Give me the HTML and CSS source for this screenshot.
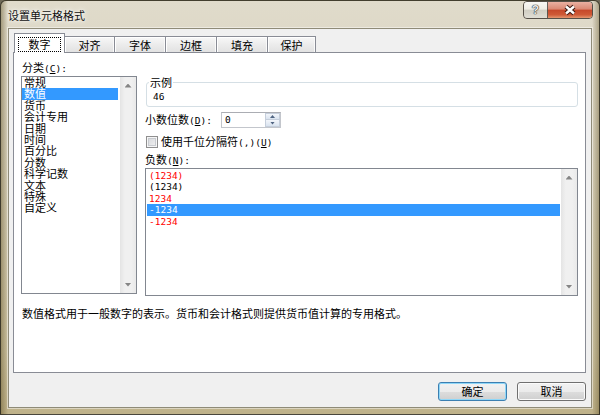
FILE: index.html
```html
<!DOCTYPE html>
<html lang="zh-CN">
<head>
    <meta charset="UTF-8">
    <meta name="viewport" content="width=device-width, initial-scale=1.0">
    <title>设置单元格格式</title>
    <link rel="stylesheet" href="styles.css">
</head>
<body>

<div class="window">
    <div class="titlebar">
        <span class="title">设置单元格格式</span>
        <div class="caption-buttons">
            <div class="cap-btn help">?</div>
            <div class="cap-btn close">
                <svg width="16" height="12" viewBox="0 0 16 12">
                    <path d="M4 2.5 L12 9.5 M12 2.5 L4 9.5" stroke="#3a1810" stroke-width="4.4" fill="none"/>
                    <path d="M4 2.5 L12 9.5 M12 2.5 L4 9.5" stroke="#ffffff" stroke-width="2.4" fill="none"/>
                </svg>
            </div>
        </div>
    </div>

    <div class="client">
        <div class="tabs">
            <div class="tab active"><span class="focus">数字</span></div>
            <div class="tab first">对齐</div>
            <div class="tab">字体</div>
            <div class="tab">边框</div>
            <div class="tab">填充</div>
            <div class="tab last">保护</div>
        </div>

        <div class="panel">
            <div class="panel-grid">
                <div class="col-left">
                    <div class="label">分类<span class="lat">(<u>C</u>):</span></div>
                    <div class="listbox category">
                        <div class="items">
                            <div class="item">常规</div>
                            <div class="item selected">数值</div>
                            <div class="item">货币</div>
                            <div class="item">会计专用</div>
                            <div class="item">日期</div>
                            <div class="item">时间</div>
                            <div class="item">百分比</div>
                            <div class="item">分数</div>
                            <div class="item">科学记数</div>
                            <div class="item">文本</div>
                            <div class="item">特殊</div>
                            <div class="item">自定义</div>
                        </div>
                        <div class="scrollbar">
                            <div class="arrow up"></div>
                            <div class="arrow down"></div>
                        </div>
                    </div>
                </div>

                <div class="col-right">
                    <fieldset class="sample">
                        <legend>示例</legend>
                        <div class="num">46</div>
                    </fieldset>

                    <div class="decimals">
                        <span class="dec-label">小数位数<span class="lat">(<u>D</u>):</span></span>
                        <div class="spinner">
                            <span class="num">0</span>
                            <div class="spin">
                                <div class="spin-btn up"></div>
                                <div class="spin-btn down"></div>
                            </div>
                        </div>
                    </div>

                    <div class="check-row">
                        <span class="checkbox"></span>
                        <span>使用千位分隔符<span class="lat">(,)(<u>U</u>)</span></span>
                    </div>

                    <div class="label">负数<span class="lat">(<u>N</u>):</span></div>
                    <div class="listbox negative">
                        <div class="items">
                            <div class="item num red">(1234)</div>
                            <div class="item num">(1234)</div>
                            <div class="item num red">1234</div>
                            <div class="item num selected">-1234</div>
                            <div class="item num red">-1234</div>
                        </div>
                        <div class="scrollbar">
                            <div class="arrow up"></div>
                            <div class="arrow down"></div>
                        </div>
                    </div>
                </div>
            </div>

            <p class="desc">数值格式用于一般数字的表示。货币和会计格式则提供货币值计算的专用格式。</p>
        </div>

        <div class="footer">
            <button class="btn default">确定</button>
            <button class="btn">取消</button>
        </div>
    </div>
</div>

</body>
</html>
```

FILE: styles.css
```css
* {
    box-sizing: border-box;
}
body {
    margin: 0;
    width: 600px;
    height: 415px;
    overflow: hidden;
    font-family: "Noto Sans CJK SC", sans-serif;
    font-size: 11px;
    color: #000;
    background-color: #6f6a58;
}
.window {
    width: 600px;
    height: 415px;
    display: flex;
    flex-direction: column;
    border: 1px solid rgba(35, 32, 22, 0.8);
    border-radius: 6px 6px 0 0;
    background:
        linear-gradient(90deg, rgba(95, 80, 35, 0.45) 0, rgba(0, 0, 0, 0) 7px, rgba(0, 0, 0, 0) 591px, rgba(95, 80, 35, 0.4) 598px),
        linear-gradient(#e0dbcb, #d6cfb9 40%, #cbc1a0 85%, #bfb28a);
}

/* title bar */
.titlebar {
    height: 27px;
    display: flex;
    justify-content: space-between;
    padding-left: 7px;
}
.title {
    align-self: center;
    line-height: 14px;
    color: #111;
    text-shadow: 0 0 6px #fff, 0 0 3px #fff;
}
.caption-buttons {
    display: flex;
    height: 18px;
    margin-right: 6px;
    border: 1px solid rgba(40, 34, 28, 0.75);
    border-radius: 4px;
    overflow: hidden;
}
.cap-btn {
    display: flex;
    align-items: center;
    justify-content: center;
}
.help {
    width: 24px;
    border-right: 1px solid rgba(40, 34, 28, 0.7);
    font-family: "Liberation Sans", sans-serif;
    font-weight: bold;
    font-size: 12px;
    color: #e9e9e9;
    text-shadow: 0 0 1px #333, 0 0 1px #333, 0 0 1px #333;
    background: linear-gradient(rgba(255, 255, 255, 0.8), rgba(255, 255, 255, 0.5) 45%, rgba(190, 190, 185, 0.45) 50%, rgba(225, 225, 220, 0.6));
}
.close {
    width: 44px;
    background: linear-gradient(#eab1a2, #da8873 45%, #c6482a 50%, #cf5a36 80%, #e59770);
}

/* client area */
.client {
    flex: 1;
    margin: 0 7px 6px 7px;
    padding: 4px 5px 6px 4px;
    display: flex;
    flex-direction: column;
    background-color: #f0f0f0;
    border: 1px solid #8f8b78;
    box-shadow: 0 0 0 1px rgba(255, 255, 255, 0.45);
}
.tabs {
    display: flex;
    align-items: flex-end;
    margin-left: 1px;
    height: 19px;
}
.tab {
    width: 52px;
    height: 16px;
    margin-left: -1px;
    padding-top: 1px;
    text-align: center;
    line-height: 14px;
    border: 1px solid #898c95;
    border-bottom: none;
    background: linear-gradient(#f8f8f8, #ececec 50%, #e2e2e2);
    box-shadow: inset 1px 1px 0 #fff, inset -1px 0 0 #fafafa;
}
.tab.first {
    width: 51px;
}
.tab.last {
    width: 49px;
}
.tab.active {
    width: 51px;
    height: 20px;
    margin-left: 0;
    margin-bottom: -1px;
    padding: 3px 3px 1px 3px;
    position: relative;
    z-index: 2;
    background: #fff;
    box-shadow: none;
}
.focus {
    display: block;
    height: 15px;
    line-height: 13px;
    border: 1px dotted #000;
}

/* panel */
.panel {
    height: 321px;
    padding: 8px 7px 0 7px;
    background-color: #fff;
    border: 1px solid #898c95;
}
.panel-grid {
    display: grid;
    grid-template-columns: 116px 433px;
    column-gap: 8px;
    align-items: start;
}
.label {
    height: 12px;
    line-height: 12px;
    margin-bottom: 3px;
    padding-left: 1px;
}
.col-right .label {
    padding-left: 0;
}
.lat,
.num {
    font-family: "DejaVu Sans Mono", monospace;
    font-size: 9.5px;
}
.listbox {
    display: flex;
    background-color: #fff;
    border: 1px solid #828790;
}
.listbox .items {
    flex: 1;
}
.category {
    height: 218px;
}
.category .items {
    padding-right: 2px;
}
.negative {
    height: 128px;
}
.negative .items {
    padding: 1px 1px 0 1px;
}
.item {
    height: 11.4px;
    line-height: 11.4px;
    padding-left: 2px;
    white-space: nowrap;
}
.item.red {
    color: #ff0000;
}
.item.selected {
    background-color: #3399ff;
    color: #fff;
}
.scrollbar {
    width: 16px;
    display: flex;
    flex-direction: column;
    justify-content: space-between;
    background: linear-gradient(90deg, #e4e4e4, #f0f0f0 30%, #f0f0f0 70%, #e9e9e9);
}
.arrow {
    height: 17px;
    display: flex;
    align-items: center;
    justify-content: center;
}
.arrow::before {
    content: "";
    width: 7px;
    height: 4px;
    background-color: #858585;
    clip-path: polygon(50% 0, 100% 100%, 0 100%);
}
.arrow.down::before {
    clip-path: polygon(0 0, 100% 0, 50% 100%);
}

/* right column controls */
.sample {
    margin: 15px 0 0 1px;
    padding: 3px 6px 3px 6px;
    min-width: 0;
    border: 1px solid #d5dfe5;
    border-radius: 3px;
}
.sample legend {
    margin-left: -4px;
    padding: 0 1px;
    line-height: 12px;
}
.sample .num {
    line-height: 12px;
}
.decimals {
    display: flex;
    align-items: center;
    height: 16px;
    margin-top: 5px;
}
.dec-label {
    width: 76px;
    line-height: 14px;
}
.spinner {
    width: 60px;
    height: 16px;
    display: flex;
    justify-content: space-between;
    align-items: center;
    padding-left: 3px;
    border: 1px solid #c3c6cc;
    border-top-color: #abadb3;
}
.spinner .num {
    line-height: 14px;
}
.spin {
    width: 15px;
    height: 14px;
    display: flex;
    flex-direction: column;
}
.spin-btn {
    height: 7px;
    display: flex;
    align-items: center;
    justify-content: center;
    border: 1px solid #c5cedb;
    background: linear-gradient(#f3f6fb, #d9e3ef);
}
.spin-btn.down {
    border-top: none;
}
.spin-btn::before {
    content: "";
    width: 5px;
    height: 3px;
    background-color: #4f6482;
    clip-path: polygon(50% 0, 100% 100%, 0 100%);
}
.spin-btn.down::before {
    clip-path: polygon(0 0, 100% 0, 50% 100%);
}
.check-row {
    display: flex;
    align-items: center;
    height: 13px;
    margin-top: 7px;
    margin-bottom: 5px;
    line-height: 13px;
}
.checkbox {
    width: 12px;
    height: 12px;
    margin: 0 3px 0 1px;
    border: 1px solid #8f8f8f;
    background: linear-gradient(135deg, #d2d4d8, #f4f4f4);
    box-shadow: inset 0 0 0 1px #f6f6f6, inset 0 0 0 2px #c8cbd0;
}
.desc {
    margin: 11px 0 0 1px;
    line-height: 12px;
}

/* buttons */
.footer {
    display: flex;
    justify-content: flex-end;
    gap: 10px;
    margin-top: 9px;
}
.btn {
    width: 69px;
    height: 19px;
    padding: 0;
    font-family: "Noto Sans CJK SC", sans-serif;
    font-size: 11px;
    line-height: 17px;
    color: #000;
    border: 1px solid #707070;
    border-radius: 3px;
    background: linear-gradient(#f2f2f2, #ebebeb 50%, #dddddd 51%, #cfcfcf);
    box-shadow: inset 0 0 0 1px #fbfbfb;
}
.btn.default {
    border-color: #3c7fb1;
    box-shadow: inset 0 0 0 1px #8fd7f8;
}
```
